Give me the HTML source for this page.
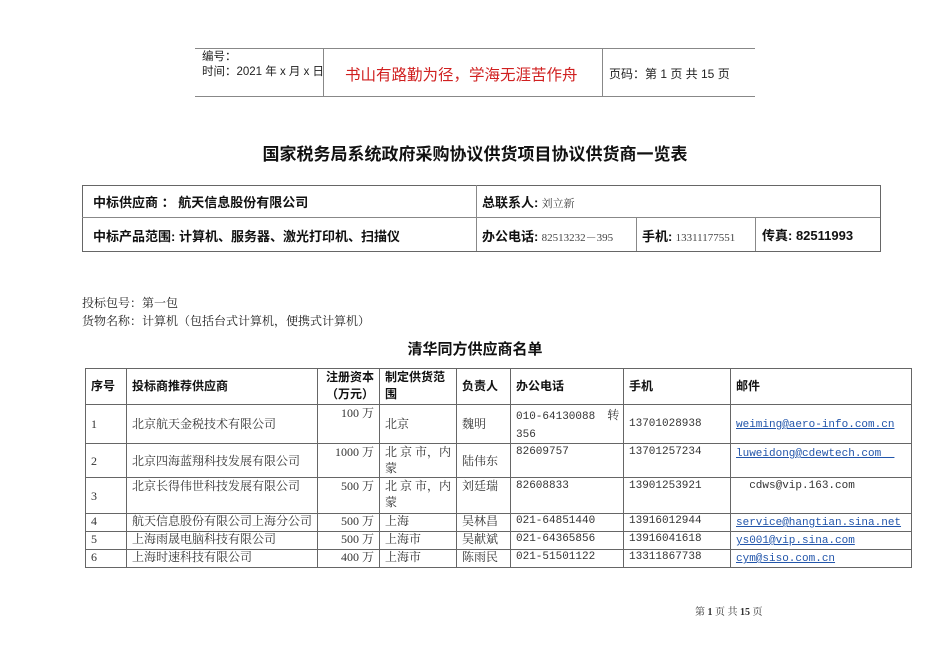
<!DOCTYPE html>
<html><head><meta charset="utf-8"><style>
body{margin:0;width:950px;height:672px;background:#fff;position:relative;overflow:hidden;font-family:"Liberation Serif","Noto Serif CJK SC",serif;color:#222}
.a{position:absolute;white-space:nowrap}
.s{font-family:"Liberation Sans","Noto Sans CJK SC",sans-serif}
.h{position:absolute;background:#888}
table{position:absolute;border-collapse:collapse;font-size:12px;table-layout:fixed}
td{border:1px solid #666;padding:0 5px;vertical-align:top;line-height:16px;color:#333;overflow:hidden;white-space:nowrap}
th{border:1px solid #666;padding:0 5px;font-weight:bold;text-align:left;font-family:"Liberation Sans","Noto Sans CJK SC",sans-serif;line-height:17px;color:#111;font-size:12px;vertical-align:top}
.u{color:#2255aa;text-decoration:underline;font-family:"Liberation Mono",monospace;font-size:11px;line-height:16px}
.m{font-family:"Liberation Mono",monospace;font-size:11px;line-height:16px}
.b{font-weight:bold;color:#111;font-family:"Liberation Sans","Noto Sans CJK SC",sans-serif}
tr.t td, tr.t td span{line-height:15px}
</style></head><body>
<div class="h" style="left:195px;top:48px;width:560px;height:1px"></div>
<div class="h" style="left:195px;top:96px;width:560px;height:1px"></div>
<div class="h" style="left:323px;top:48px;width:1px;height:48px"></div>
<div class="h" style="left:602px;top:48px;width:1px;height:48px"></div>
<div class="a s" style="left:202px;top:50px;font-size:11.5px;line-height:15px">编号：<br>时间：2021 年 x 月 x 日</div>
<div class="a s" style="left:345px;top:63px;font-size:15.5px;color:#d02020">书山有路勤为径，学海无涯苦作舟</div>
<div class="a s" style="left:609px;top:65px;font-size:12px">页码：第 1 页  共 15 页</div>

<div class="a s" style="left:0;width:950px;text-align:center;top:140px;font-size:17px;font-weight:bold;color:#111">国家税务局系统政府采购协议供货项目协议供货商一览表</div>

<div style="position:absolute;left:82px;top:185px;width:797px;height:65px;border:1px solid #666"></div>
<div class="h" style="left:82px;top:217px;width:798px;height:1px"></div>
<div class="h" style="left:476px;top:185px;width:1px;height:66px"></div>
<div class="h" style="left:636px;top:217px;width:1px;height:34px"></div>
<div class="h" style="left:755px;top:217px;width:1px;height:34px"></div>
<div class="a b" style="left:93px;top:192px;font-size:13px">中标供应商 ： 航天信息股份有限公司</div>
<div class="a" style="left:482px;top:192px;font-size:13px"><span class="b">总联系人:</span> <span style="font-size:11px;color:#444">刘立新</span></div>
<div class="a b" style="left:93px;top:226px;font-size:13px">中标产品范围: 计算机、服务器、激光打印机、扫描仪</div>
<div class="a" style="left:482px;top:226px;font-size:13px"><span class="b">办公电话:</span> <span style="font-size:11px;color:#444">82513232－395</span></div>
<div class="a" style="left:642px;top:226px;font-size:13px"><span class="b">手机:</span> <span style="font-size:11px;color:#444">13311177551</span></div>
<div class="a b" style="left:762px;top:225px;font-size:13px">传真: 82511993</div>

<div class="a" style="left:82px;top:294px;font-size:12px;line-height:18px">投标包号：第一包<br>货物名称：计算机（包括台式计算机，便携式计算机）</div>
<div class="a s" style="left:0;width:950px;text-align:center;top:338px;font-size:15px;font-weight:bold;color:#111">清华同方供应商名单</div>

<table style="left:85px;top:368px;width:827px">
<colgroup><col style="width:41px"><col style="width:191px"><col style="width:62px"><col style="width:77px"><col style="width:54px"><col style="width:113px"><col style="width:107px"><col></colgroup>
<tr style="height:36px"><th style="vertical-align:middle">序号</th><th style="vertical-align:middle">投标商推荐供应商</th><th style="text-align:right">注册资本<br>（万元）</th><th style="white-space:normal">制定供货范<br>围</th><th style="vertical-align:middle">负责人</th><th style="vertical-align:middle">办公电话</th><th style="vertical-align:middle">手机</th><th style="vertical-align:middle">邮件</th></tr>
<tr style="height:38px"><td style="vertical-align:middle">1</td><td style="vertical-align:middle">北京航天金税技术有限公司</td><td style="text-align:right">100 万</td><td style="vertical-align:middle">北京</td><td style="vertical-align:middle">魏明</td><td style="padding-top:2px"><span class="m">010-64130088</span> &nbsp;&nbsp;&nbsp;转<br><span class="m">356</span></td><td style="vertical-align:middle" class="m">13701028938</td><td style="vertical-align:middle"><span class="u">weiming@aero-info.com.cn</span></td></tr>
<tr style="height:34px"><td style="vertical-align:middle">2</td><td style="vertical-align:middle">北京四海蓝翔科技发展有限公司</td><td style="text-align:right">1000 万</td><td>北 京 市，内<br>蒙</td><td style="vertical-align:middle">陆伟东</td><td class="m">82609757</td><td class="m">13701257234</td><td><span class="u">luweidong@cdewtech.com &nbsp;</span></td></tr>
<tr style="height:36px"><td style="vertical-align:middle">3</td><td>北京长得伟世科技发展有限公司</td><td style="text-align:right">500 万</td><td>北 京 市，内<br>蒙</td><td>刘廷瑞</td><td class="m">82608833</td><td class="m">13901253921</td><td class="m">&nbsp;&nbsp;cdws@vip.163.com</td></tr>
<tr class="t" style="height:18px"><td>4</td><td>航天信息股份有限公司上海分公司</td><td style="text-align:right">500 万</td><td>上海</td><td>吴林昌</td><td class="m">021-64851440</td><td class="m">13916012944</td><td><span class="u">service@hangtian.sina.net</span></td></tr>
<tr class="t" style="height:18px"><td>5</td><td>上海雨晟电脑科技有限公司</td><td style="text-align:right">500 万</td><td>上海市</td><td>吴献斌</td><td class="m">021-64365856</td><td class="m">13916041618</td><td><span class="u">ys001@vip.sina.com</span></td></tr>
<tr class="t" style="height:18px"><td>6</td><td>上海时速科技有限公司</td><td style="text-align:right">400 万</td><td>上海市</td><td>陈雨民</td><td class="m">021-51501122</td><td class="m">13311867738</td><td><span class="u">cym@siso.com.cn</span></td></tr>
</table>

<div class="a" style="left:695px;top:603px;font-size:10px;color:#333">第 <b>1</b> 页 共 <b>15</b> 页</div>
</body></html>
